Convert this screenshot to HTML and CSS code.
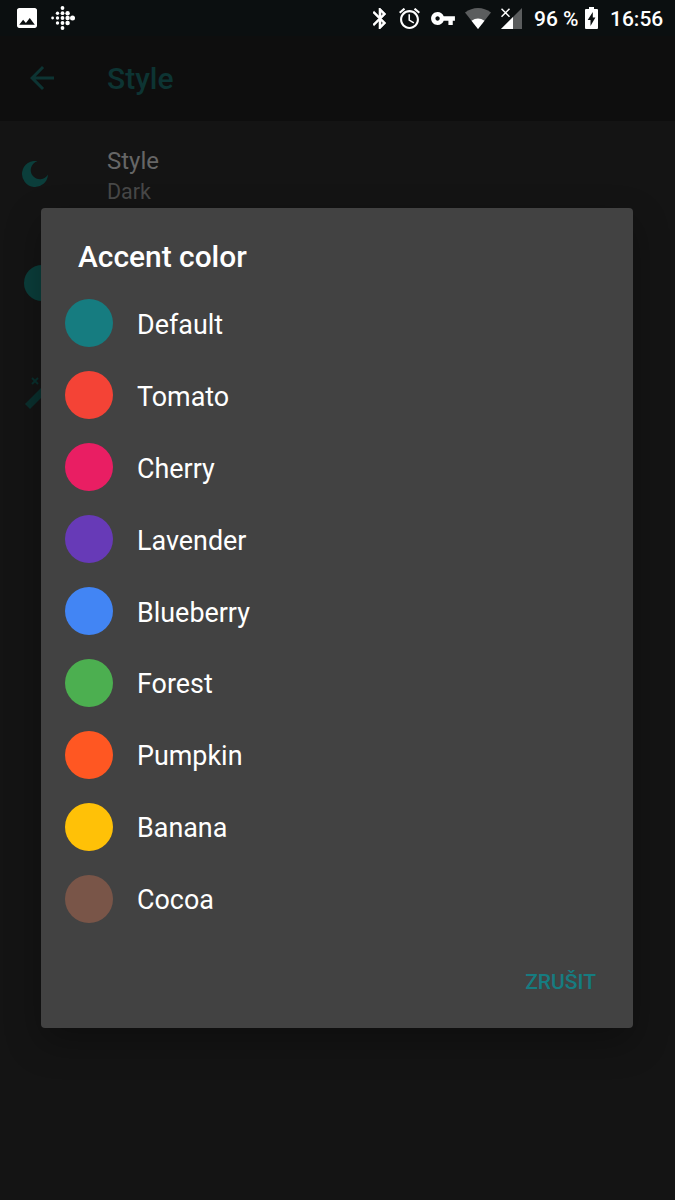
FILE: index.html
```html
<!DOCTYPE html>
<html lang="en">
<head>
    <meta charset="UTF-8">
    <meta name="viewport" content="width=device-width, initial-scale=1.0">
    <title>Style</title>
    <link rel="stylesheet" href="styles.css">
</head>
<body>
    <div class="status-bar">
        <svg class="icon-image" viewBox="3 3 18 18"><path fill="#fff" d="M21 19V5c0-1.100-.9-2-2-2H5c-1.100 0-2 .9-2 2v14c0 1.100.9 2 2 2h14c1.100 0 2-.9 2-2zM8.500 13.500l2.500 3.010L14.500 12l4.500 6H5l3.500-4.500z"/></svg>
        <svg class="icon-dots" viewBox="0 0 24 24" fill="#fff">
            <circle cx="1.600" cy="12" r="1.400"/>
            <circle cx="6.500" cy="7.200" r="1.700"/><circle cx="6.500" cy="12" r="1.700"/><circle cx="6.500" cy="17" r="1.700"/>
            <circle cx="11.500" cy="2" r="1.900"/><circle cx="11.500" cy="7.200" r="1.900"/><circle cx="11.500" cy="12" r="1.900"/><circle cx="11.500" cy="17" r="1.900"/><circle cx="11.500" cy="22" r="1.900"/>
            <circle cx="16.600" cy="7.200" r="2.200"/><circle cx="16.600" cy="12" r="2.200"/><circle cx="16.600" cy="17" r="2.200"/>
            <circle cx="21.500" cy="12" r="2.500"/>
        </svg>
        <div class="status-right">
            <svg class="icon-bluetooth" viewBox="5.300 2 12.400 20"><path fill="#fff" stroke="#fff" stroke-width=".5" d="M17.710 7.710L12 2h-1v7.590L6.410 5 5 6.410 10.590 12 5 17.590 6.410 19 11 14.410V22h1l5.710-5.710-4.300-4.290 4.300-4.290zM13 5.830l1.880 1.880L13 9.590V5.830zm1.880 10.460L13 18.170v-3.760l1.880 1.880z"/></svg>
            <svg class="icon-alarm" viewBox="2 2 20 20"><path fill="#fff" d="M22 5.720l-4.600-3.860-1.290 1.530 4.600 3.860L22 5.720zM7.880 3.390L6.600 1.860 2 5.710l1.290 1.530 4.590-3.850zM12.500 8H11v6l4.750 2.850.75-1.230-4-2.370V8zM12 4c-4.970 0-9 4.030-9 9s4.020 9 9 9c4.970 0 9-4.030 9-9s-4.030-9-9-9zm0 16c-3.870 0-7-3.130-7-7s3.130-7 7-7 7 3.130 7 7-3.130 7-7 7z"/></svg>
            <svg class="icon-key" viewBox="1 6 22 12"><path fill="#fff" d="M12.650 10C11.830 7.670 9.610 6 7 6c-3.310 0-6 2.690-6 6s2.690 6 6 6c2.610 0 4.830-1.670 5.650-4H17v4h4v-4h2v-4H12.650zM7 14c-1.100 0-2-.9-2-2s.9-2 2-2 2 .9 2 2-.9 2-2 2z"/></svg>
            <svg class="icon-wifi" viewBox="0 0 26 21"><path fill="#5b5d5e" d="M0 4.500Q6 0 13 0t13 4.500L13 21z"/><path fill="#fff" d="M6.500 12.700q6.500-4.200 13 0L13 21z"/></svg>
            <svg class="icon-signal" viewBox="0 0 21 21"><path fill="#5b5d5e" d="M21 0v21H0z"/><path fill="#fff" d="M12 9v12H0z"/><path fill="none" stroke="#0b0f10" stroke-width="4" d="M1 1l7 7M8 1L1 8"/><path fill="none" stroke="#fff" stroke-width="1.500" d="M.5.8l8 8M8.500.8l-8 8"/></svg>
            <span class="percent">96 %</span>
            <svg class="icon-battery" viewBox="0 0 13 22"><path fill="#fff" d="M4 0h5v2h3q1 0 1 1v18q0 1-1 1H1q-1 0-1-1V3q0-1 1-1h3z"/><path fill="#0b0f10" d="M7.800 5L2.700 13h2.800v6l4.900-8.500H7.800z"/></svg>
            <span class="clock">16:56</span>
        </div>
    </div>

    <header>
        <svg class="icon-back" viewBox="4 4 16 16"><path fill="#0d3433" d="M20 11H7.830l5.590-5.590L12 4l-8 8 8 8 1.410-1.410L7.830 13H20v-2z"/></svg>
        <h1>Style</h1>
    </header>

    <div class="settings">
        <div class="setting">
            <svg class="icon-moon" viewBox="0 0 26 26"><path fill="#0b3e3b" d="M15.500.2A13 13 0 1 0 26 13.500A9.200 9.200 0 1 1 15.500.2z"/></svg>
            <div class="setting-text">
                <h3>Style</h3>
                <p>Dark</p>
            </div>
        </div>
        <div class="setting">
            <div class="accent-dot"></div>
        </div>
        <div class="setting">
            <svg class="icon-wand" viewBox="0 0 36 36"><path fill="none" stroke="#0a302e" stroke-width="7" d="M2.500 30.500L24 9"/><path fill="none" stroke="#0a302e" stroke-width="2" d="M7 2l6 6M13 2L7 8"/></svg>
        </div>
    </div>

    <div class="dialog">
        <h2>Accent color</h2>
        <ul class="colors">
            <li><span class="swatch default"></span><span>Default</span></li>
            <li><span class="swatch tomato"></span><span>Tomato</span></li>
            <li><span class="swatch cherry"></span><span>Cherry</span></li>
            <li><span class="swatch lavender"></span><span>Lavender</span></li>
            <li><span class="swatch blueberry"></span><span>Blueberry</span></li>
            <li><span class="swatch forest"></span><span>Forest</span></li>
            <li><span class="swatch pumpkin"></span><span>Pumpkin</span></li>
            <li><span class="swatch banana"></span><span>Banana</span></li>
            <li><span class="swatch cocoa"></span><span>Cocoa</span></li>
        </ul>
        <div class="actions">
            <button>ZRUŠIT</button>
        </div>
    </div>
</body>
</html>
```

FILE: styles.css
```css
* {
    box-sizing: border-box;
}
body {
    font-family: Roboto, sans-serif;
    margin: 0;
    height: 1200px;
    background-color: #141414;
    position: relative;
    overflow: hidden;
}
h1, h2, h3, p, ul {
    margin: 0;
    padding: 0;
}
svg {
    display: block;
    flex: none;
}
.status-bar {
    height: 36px;
    padding: 0 12px 0 17px;
    display: flex;
    align-items: center;
    background-color: #0b0f10;
    color: #fff;
}
.icon-image {
    width: 20px;
    height: 20px;
}
.icon-dots {
    width: 24px;
    height: 24px;
    margin-left: 14px;
}
.status-right {
    margin-left: auto;
    display: flex;
    align-items: center;
    font-size: 21px;
    font-weight: 500;
    white-space: nowrap;
}
.status-right span {
    line-height: 34px;
    padding-top: 2px;
}
.icon-bluetooth {
    width: 13px;
    height: 21px;
}
.icon-alarm {
    width: 21px;
    height: 21px;
    margin-left: 13px;
}
.icon-key {
    width: 24px;
    height: 13px;
    margin-left: 11px;
}
.icon-wifi {
    width: 26px;
    height: 21px;
    margin-left: 10px;
}
.icon-signal {
    width: 21px;
    height: 21px;
    margin-left: 10px;
}
.percent {
    width: 45px;
    margin-left: 12px;
}
.icon-battery {
    width: 13px;
    height: 22px;
    margin-left: 6px;
}
.clock {
    width: 53px;
    margin-left: 12px;
}
header {
    height: 85px;
    padding-left: 30px;
    display: flex;
    align-items: center;
    background-color: #0e0e0e;
}
.icon-back {
    width: 24px;
    height: 24px;
    margin-bottom: 2px;
}
header h1 {
    margin-left: 53px;
    font-size: 30px;
    font-weight: 500;
    color: #0d3433;
}
.setting {
    height: 109px;
    padding-left: 22px;
    display: flex;
    align-items: center;
}
.icon-moon {
    width: 26px;
    height: 26px;
    margin-bottom: 4px;
}
.setting-text {
    margin-left: 59px;
    padding-top: 2px;
}
.setting h3 {
    font-size: 24px;
    font-weight: 400;
    line-height: 30px;
    color: #666;
}
.setting p {
    font-size: 21.500px;
    line-height: 31px;
    color: #484848;
}
.accent-dot {
    width: 36px;
    height: 36px;
    margin-left: 2px;
    margin-bottom: 4px;
    border-radius: 50%;
    background-color: #0b3e3b;
}
.icon-wand {
    width: 36px;
    height: 36px;
    margin-left: 3px;
}
/* dialog sits over the settings list */
.dialog {
    position: absolute;
    left: 41px;
    top: 208px;
    width: 592px;
    height: 820px;
    padding-top: 31px;
    border-radius: 4px;
    background-color: #424242;
    color: #fff;
    box-shadow: 0 14px 36px rgba(0, 0, 0, 0.3);
}
.dialog h2 {
    padding-left: 37px;
    font-size: 29.900px;
    font-weight: 500;
    line-height: 36px;
}
.colors {
    list-style: none;
    margin-top: 12.500px;
}
.colors li {
    height: 71.900px;
    padding-left: 24px;
    display: flex;
    align-items: center;
    font-size: 26.900px;
}
.colors li span:last-child {
    padding-top: 3px;
}
.swatch {
    width: 48px;
    height: 48px;
    margin-right: 24px;
    border-radius: 50%;
}
.default {
    background-color: #167c80;
}
.tomato {
    background-color: #f44336;
}
.cherry {
    background-color: #e91e63;
}
.lavender {
    background-color: #673ab7;
}
.blueberry {
    background-color: #4285f4;
}
.forest {
    background-color: #4caf50;
}
.pumpkin {
    background-color: #ff5722;
}
.banana {
    background-color: #ffc107;
}
.cocoa {
    background-color: #795548;
}
.actions {
    margin-top: 29.500px;
    padding-right: 37px;
    display: flex;
    justify-content: flex-end;
}
.actions button {
    padding: 0;
    border: none;
    background: none;
    color: #167c80;
    font-family: inherit;
    font-size: 21px;
    font-weight: 500;
    line-height: 36px;
    cursor: pointer;
}
```
